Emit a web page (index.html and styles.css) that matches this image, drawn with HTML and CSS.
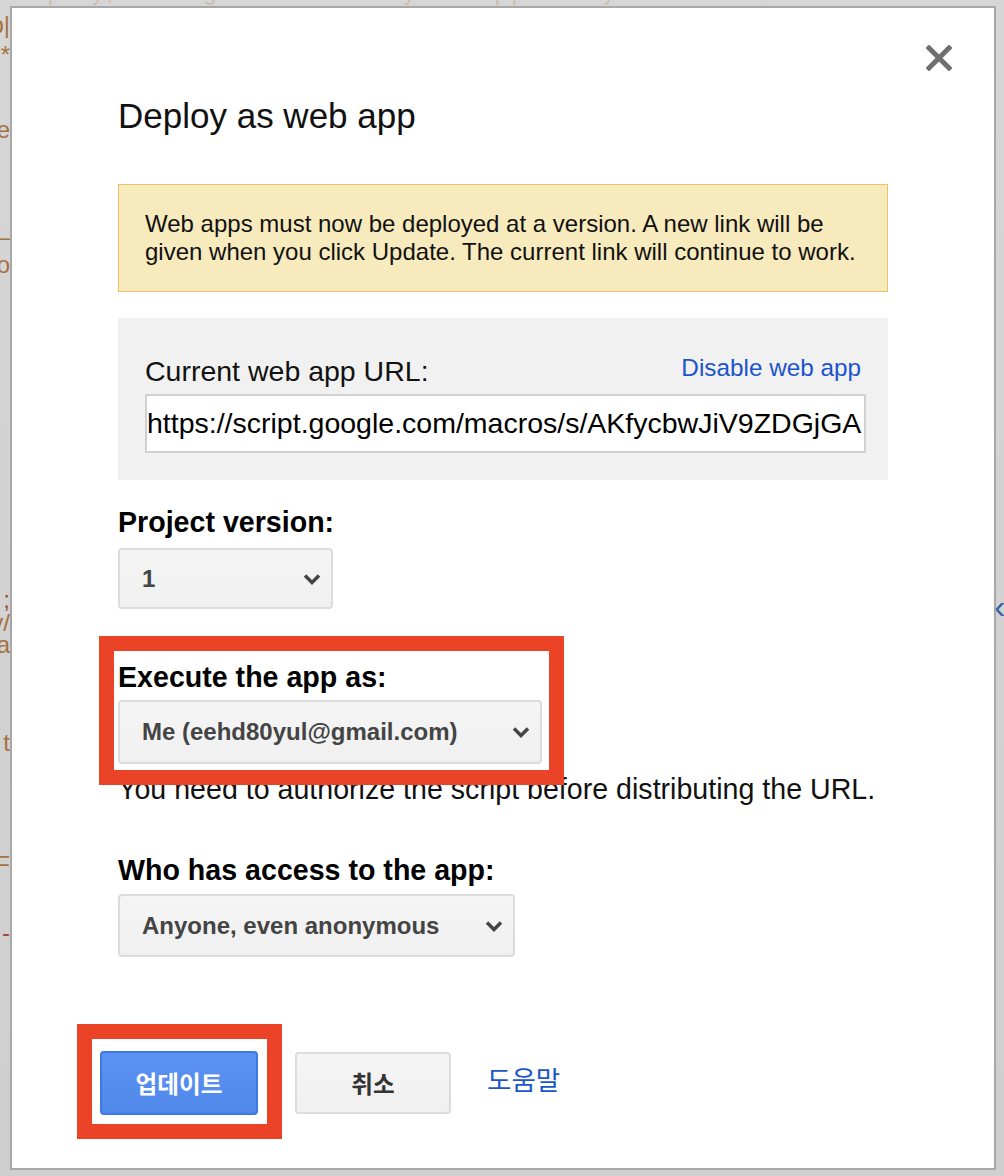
FILE: index.html
```html
<!DOCTYPE html>
<html lang="en">
<head>
<meta charset="utf-8">
<title>Deploy as web app</title>
<link rel="stylesheet" href="styles.css">
</head>
<body>
<div class="page">
  <div class="topstrip"><span>Deploy, manage and share your app today</span></div>
  <div class="row">
    <div class="gutter left">
      <div class="frag" style="margin-top:8px">Imp|</div>
      <div class="frag" style="margin-top:8px">*</div>
      <div class="frag" style="margin-top:53px">De</div>
      <div class="frag" style="margin-top:85px">–</div>
      <div class="frag" style="margin-top:6px">No</div>
      <div class="frag red" style="margin-top:313px">;</div>
      <div class="frag" style="margin-top:1px">y/</div>
      <div class="frag" style="margin-top:0">da</div>
      <div class="frag" style="margin-top:76px">t</div>
      <div class="frag" style="margin-top:100px">F</div>
      <div class="frag red" style="margin-top:46px">-</div>
    </div>
    <div class="dialog">
      <div class="close-row">
        <svg class="close" width="26" height="26" viewBox="0 0 26 26"><path d="M3 3 L23 23 M23 3 L3 23" stroke="#6f6f6f" stroke-width="5" stroke-linecap="square" fill="none"/></svg>
      </div>
      <h1 class="title">Deploy as web app</h1>
      <div class="notice">Web apps must now be deployed at a version. A new link will be given when you click Update. The current link will continue to work.</div>
      <div class="urlbox">
        <div class="urlhead">
          <span class="urllabel">Current web app URL:</span>
          <a class="link disable">Disable web app</a>
        </div>
        <div class="urlinput">https://script.google.com/macros/s/AKfycbwJiV9ZDGjGA</div>
      </div>
      <div class="label l-version">Project version:</div>
      <div class="select s-version"><span>1</span><svg class="chev" width="18" height="12" viewBox="0 0 18 12"><path d="M2 2.5 L9 9.5 L16 2.5" stroke="#444" stroke-width="3.5" fill="none"/></svg></div>
      <div class="label l-exec">Execute the app as:</div>
      <div class="select s-exec"><span>Me (eehd80yul@gmail.com)</span><svg class="chev" width="18" height="12" viewBox="0 0 18 12"><path d="M2 2.5 L9 9.5 L16 2.5" stroke="#444" stroke-width="3.5" fill="none"/></svg></div>
      <div class="hint">You need to authorize the script before distributing the URL.</div>
      <div class="label l-access">Who has access to the app:</div>
      <div class="select s-access"><span>Anyone, even anonymous</span><svg class="chev" width="18" height="12" viewBox="0 0 18 12"><path d="M2 2.5 L9 9.5 L16 2.5" stroke="#444" stroke-width="3.5" fill="none"/></svg></div>
      <div class="buttons">
        <button class="btn primary">업데이트</button>
        <button class="btn cancel">취소</button>
        <a class="link help">도움말</a>
      </div>
      <div class="mark mark1"></div>
      <div class="mark mark2"></div>
    </div>
    <div class="gutter right">
      <div class="frag blue" style="margin-top:580px">‹</div>
    </div>
  </div>
</div>
</body>
</html>
```
FILE: styles.css
```css
* { box-sizing: border-box; }
html, body { margin: 0; padding: 0; }
body {
  width: 1004px;
  height: 1176px;
  overflow: hidden;
  background: #d2d2d2;
  font-family: "Liberation Sans", Arial, "Noto Sans CJK KR", sans-serif;
  color: #000;
}
.page {
  width: 1004px;
  height: 1176px;
  background: linear-gradient(to bottom, #d6d6d6, #cfcfcf);
  display: flex;
  flex-direction: column;
}
.topstrip {
  height: 6px;
  overflow: hidden;
  padding-left: 10px;
}
.topstrip span {
  display: block;
  margin-top: -20px;
  font-size: 22px;
  line-height: 26px;
  color: #d0bba6;
  white-space: nowrap;
  letter-spacing: 5px;
}
.row {
  display: flex;
  flex: 1;
  min-height: 0;
}
.gutter {
  overflow: hidden;
  display: flex;
  flex-direction: column;
  font-size: 24px;
  line-height: 22px;
  color: #a6703f;
}
.gutter.left { width: 10px; flex: none; align-items: flex-end; }
.gutter.right { width: 8px; flex: none; align-items: flex-start; }
.frag {
  white-space: nowrap;
  display: flex;
  justify-content: flex-end;
  height: 22px;
}
.frag.red { color: #a44a32; }
.frag.blue { color: #3a62a8; font-size: 34px; line-height: 40px; height: 40px; margin-left: -2px; }

.dialog {
  position: relative;
  width: 986px;
  height: 1164px;
  flex: none;
  background: #fff;
  border: 2px solid #a8a8a8;
  padding: 0 0 0 106px;
}
.close-row {
  display: flex;
  justify-content: flex-end;
  padding: 37px 42px 0 0;
  height: 63px;
}
.close { filter: blur(0.4px); }
.title {
  margin: 25px 0 0 0;
  font-weight: normal;
  font-size: 35px;
  line-height: 40px;
  color: #111;
}
.notice {
  margin-top: 48px;
  width: 770px;
  height: 108px;
  background: #f7eabd;
  border: 1px solid #e9c36c;
  padding: 25px 20px 0 26px;
  font-size: 24px;
  line-height: 28px;
  color: #111;
}
.urlbox {
  margin-top: 26px;
  width: 770px;
  height: 162px;
  background: #f1f1f1;
  padding: 35px 22px 0 27px;
}
.urlhead {
  display: flex;
  justify-content: space-between;
  align-items: flex-start;
  height: 41px;
}
.urllabel { font-size: 28.5px; line-height: 36px; color: #111; }
.link { color: #1b55cc; text-decoration: none; cursor: pointer; }
.disable { font-size: 24.3px; line-height: 36px; margin-top: -3px; margin-right: 5px; }
.urlinput {
  width: 721px;
  height: 59px;
  background: #fff;
  border: 2px solid #d0d0d0;
  padding: 0;
  font-size: 28.5px;
  line-height: 55px;
  white-space: nowrap;
  overflow: hidden;
  color: #000;
}
.label {
  font-weight: bold;
  font-size: 28.6px;
  line-height: 32px;
  color: #000;
}
.l-version { margin-top: 26px; }
.l-exec { margin-top: 52px; }
.l-access { margin-top: 49px; }
.select {
  display: flex;
  align-items: center;
  justify-content: space-between;
  background: linear-gradient(to bottom, #f5f5f5, #f0f0f0);
  border: 2px solid #dcdcdc;
  border-radius: 4px;
  padding: 0 10px 0 22px;
  font-weight: bold;
  font-size: 24px;
  color: #444;
}
.s-version { width: 215px; height: 61px; margin-top: 10px; }
.s-exec { width: 424px; height: 64px; margin-top: 7px; }
.s-access { width: 397px; height: 63px; margin-top: 8px; }
.hint {
  margin-top: 9px;
  font-size: 28.6px;
  line-height: 32px;
  color: #111;
}
.buttons {
  display: flex;
  align-items: center;
  margin-top: 94px;
  margin-left: -18px;
}
.btn {
  font-family: "Liberation Sans", Arial, "Noto Sans CJK KR", sans-serif;
  font-weight: bold;
  font-size: 23.6px;
  border-radius: 4px;
  height: 64px;
  cursor: pointer;
}
.primary {
  width: 158px;
  background: linear-gradient(to bottom, #5b92f3, #5088e9);
  border: 2px solid #3c78e6;
  color: #fff;
}
.cancel {
  margin-left: 37px;
  width: 156px;
  height: 62px;
  background: linear-gradient(to bottom, #f5f5f5, #f0f0f0);
  border: 2px solid #dcdcdc;
  color: #333;
}
.help {
  margin-left: 36px;
  margin-top: -10px;
  font-size: 26.5px;
  font-family: "Noto Sans CJK KR", sans-serif;
}
.mark {
  position: absolute;
  border: 15px solid #eb4328;
}
.mark1 { left: 87px; top: 628px; width: 465px; height: 149px; }
.mark2 { left: 65px; top: 1016px; width: 205px; height: 115px; }
```
